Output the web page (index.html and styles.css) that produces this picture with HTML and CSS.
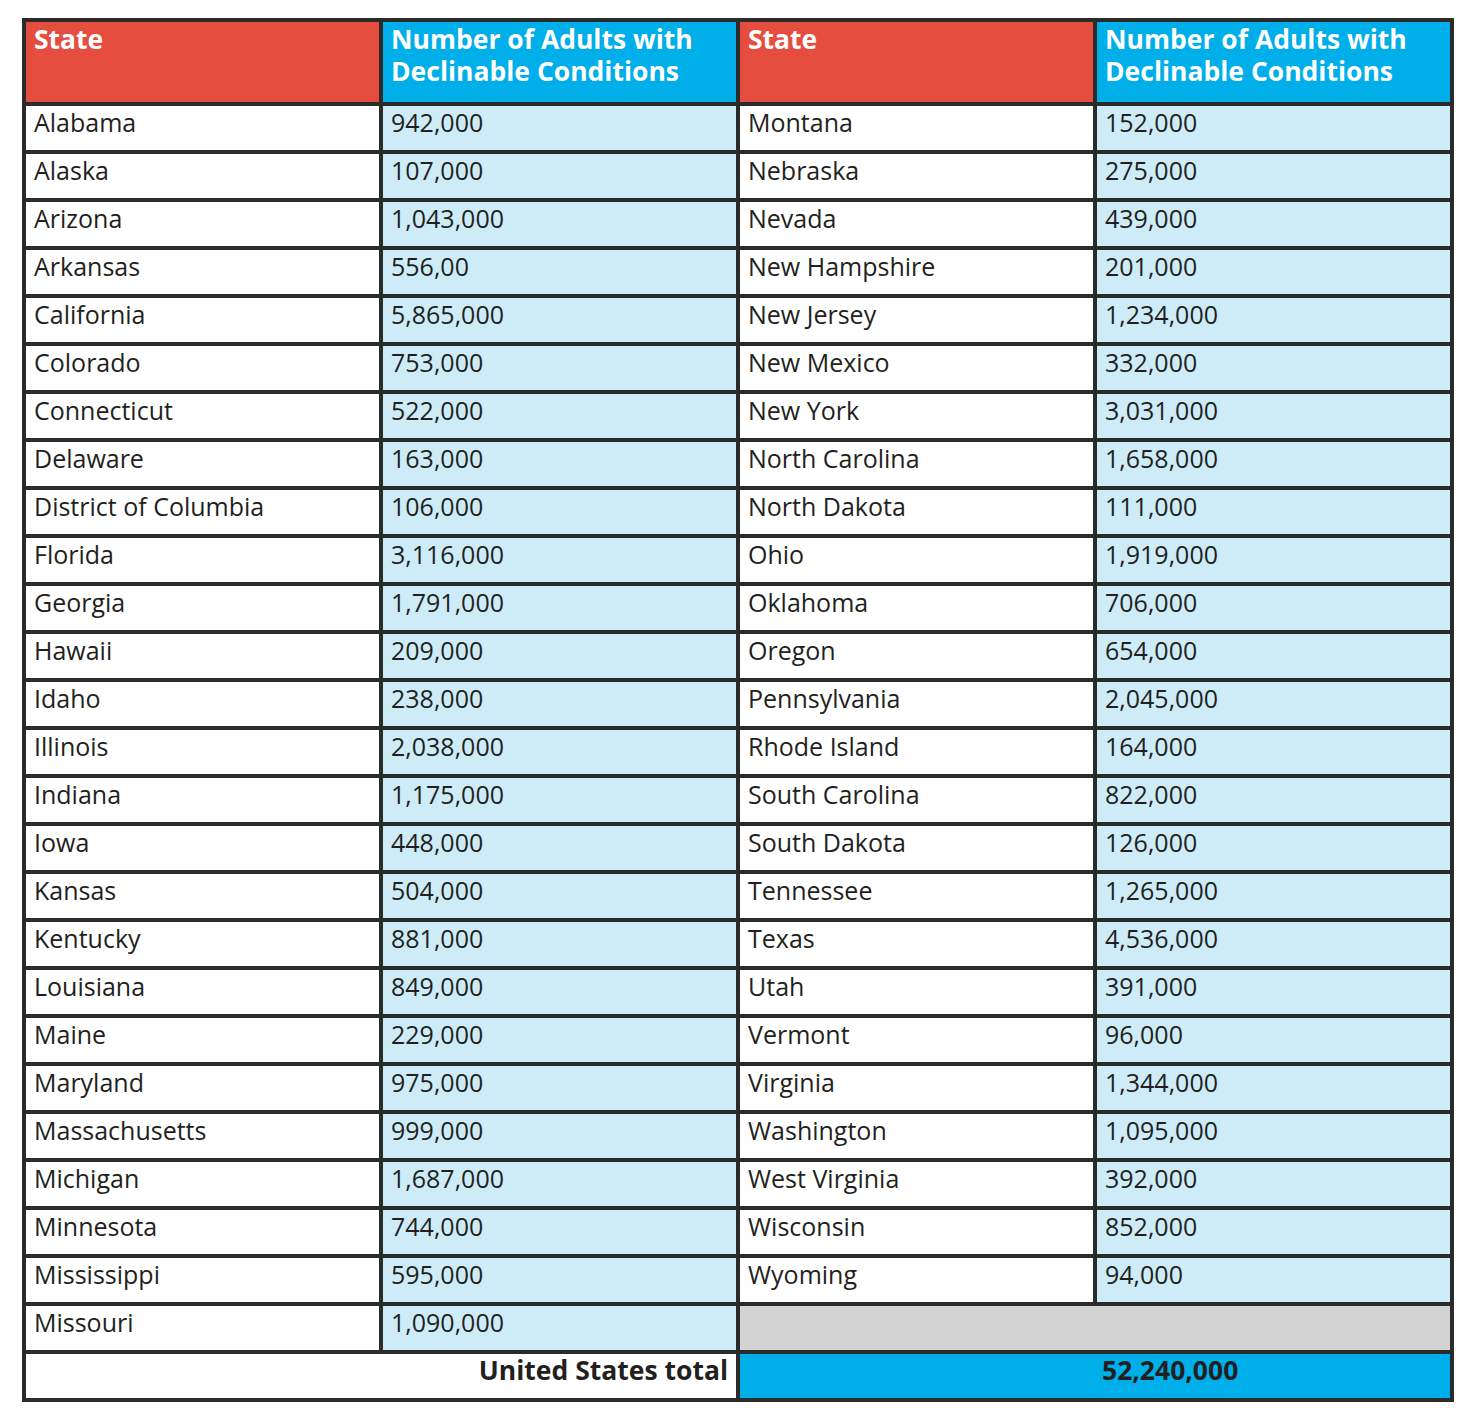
FILE: index.html
```html
<!DOCTYPE html>
<html lang="en">
<head>
<meta charset="utf-8">
<title>Adults with Declinable Conditions by State</title>
<link rel="stylesheet" href="styles.css">
</head>
<body>
<table class="data">
  <colgroup><col class="c"><col class="c"><col class="c"><col class="c"></colgroup>
  <thead>
    <tr class="head">
      <th class="h-state">State</th>
      <th class="h-num">Number of Adults with Declinable Conditions</th>
      <th class="h-state">State</th>
      <th class="h-num">Number of Adults with Declinable Conditions</th>
    </tr>
  </thead>
  <tbody>
    <tr><td class="st">Alabama</td><td class="num">942,000</td><td class="st">Montana</td><td class="num">152,000</td></tr>
    <tr><td class="st">Alaska</td><td class="num">107,000</td><td class="st">Nebraska</td><td class="num">275,000</td></tr>
    <tr><td class="st">Arizona</td><td class="num">1,043,000</td><td class="st">Nevada</td><td class="num">439,000</td></tr>
    <tr><td class="st">Arkansas</td><td class="num">556,00</td><td class="st">New Hampshire</td><td class="num">201,000</td></tr>
    <tr><td class="st">California</td><td class="num">5,865,000</td><td class="st">New Jersey</td><td class="num">1,234,000</td></tr>
    <tr><td class="st">Colorado</td><td class="num">753,000</td><td class="st">New Mexico</td><td class="num">332,000</td></tr>
    <tr><td class="st">Connecticut</td><td class="num">522,000</td><td class="st">New York</td><td class="num">3,031,000</td></tr>
    <tr><td class="st">Delaware</td><td class="num">163,000</td><td class="st">North Carolina</td><td class="num">1,658,000</td></tr>
    <tr><td class="st">District of Columbia</td><td class="num">106,000</td><td class="st">North Dakota</td><td class="num">111,000</td></tr>
    <tr><td class="st">Florida</td><td class="num">3,116,000</td><td class="st">Ohio</td><td class="num">1,919,000</td></tr>
    <tr><td class="st">Georgia</td><td class="num">1,791,000</td><td class="st">Oklahoma</td><td class="num">706,000</td></tr>
    <tr><td class="st">Hawaii</td><td class="num">209,000</td><td class="st">Oregon</td><td class="num">654,000</td></tr>
    <tr><td class="st">Idaho</td><td class="num">238,000</td><td class="st">Pennsylvania</td><td class="num">2,045,000</td></tr>
    <tr><td class="st">Illinois</td><td class="num">2,038,000</td><td class="st">Rhode Island</td><td class="num">164,000</td></tr>
    <tr><td class="st">Indiana</td><td class="num">1,175,000</td><td class="st">South Carolina</td><td class="num">822,000</td></tr>
    <tr><td class="st">Iowa</td><td class="num">448,000</td><td class="st">South Dakota</td><td class="num">126,000</td></tr>
    <tr><td class="st">Kansas</td><td class="num">504,000</td><td class="st">Tennessee</td><td class="num">1,265,000</td></tr>
    <tr><td class="st">Kentucky</td><td class="num">881,000</td><td class="st">Texas</td><td class="num">4,536,000</td></tr>
    <tr><td class="st">Louisiana</td><td class="num">849,000</td><td class="st">Utah</td><td class="num">391,000</td></tr>
    <tr><td class="st">Maine</td><td class="num">229,000</td><td class="st">Vermont</td><td class="num">96,000</td></tr>
    <tr><td class="st">Maryland</td><td class="num">975,000</td><td class="st">Virginia</td><td class="num">1,344,000</td></tr>
    <tr><td class="st">Massachusetts</td><td class="num">999,000</td><td class="st">Washington</td><td class="num">1,095,000</td></tr>
    <tr><td class="st">Michigan</td><td class="num">1,687,000</td><td class="st">West Virginia</td><td class="num">392,000</td></tr>
    <tr><td class="st">Minnesota</td><td class="num">744,000</td><td class="st">Wisconsin</td><td class="num">852,000</td></tr>
    <tr><td class="st">Mississippi</td><td class="num">595,000</td><td class="st">Wyoming</td><td class="num">94,000</td></tr>
    <tr><td class="st">Missouri</td><td class="num">1,090,000</td><td class="empty" colspan="2"></td></tr>
  </tbody>
  <tfoot>
    <tr class="total">
      <td class="total-label" colspan="2">United States total</td>
      <td class="total-pad"></td>
      <td class="total-value">52,240,000</td>
    </tr>
  </tfoot>
</table>
</body>
</html>
```

FILE: styles.css
```css
html, body {
  margin: 0;
  padding: 0;
  background: #ffffff;
}

body {
  padding: 18px 0 0 22px;
  font-family: "Open Sans", "Noto Sans", "DejaVu Sans", sans-serif;
  color: #231f20;
}

.data {
  border-collapse: collapse;
  table-layout: fixed;
  width: 1432px;
  font-size: 25px;
  line-height: 32px;
}

.data .c {
  width: 25%;
}

.data th,
.data td {
  border: 4px solid #2b2b2b;
  padding: 0 8px;
  text-align: left;
  vertical-align: top;
}

.head th {
  height: 79px;
  color: #ffffff;
  font-weight: 700;
  font-size: 26.5px;
  line-height: 32px;
  padding-top: 1px;
}

.h-state {
  background: #e54d3e;
}

.h-num {
  background: #00aeea;
}

tbody tr {
  height: 48px;
}

.st {
  background: #ffffff;
}

.num {
  background: #cdecf8;
}

.empty {
  background: #d3d3d3;
}

.total {
  height: 48px;
}

.total td {
  font-weight: 700;
  font-size: 26.5px;
}

.total-label {
  background: #ffffff;
  text-align: right !important;
}

.total-pad {
  background: #00aeea;
  border-right-style: hidden !important;
}

.total-value {
  background: #00aeea;
  border-left-style: hidden !important;
  padding-left: 7px !important;
}
```
